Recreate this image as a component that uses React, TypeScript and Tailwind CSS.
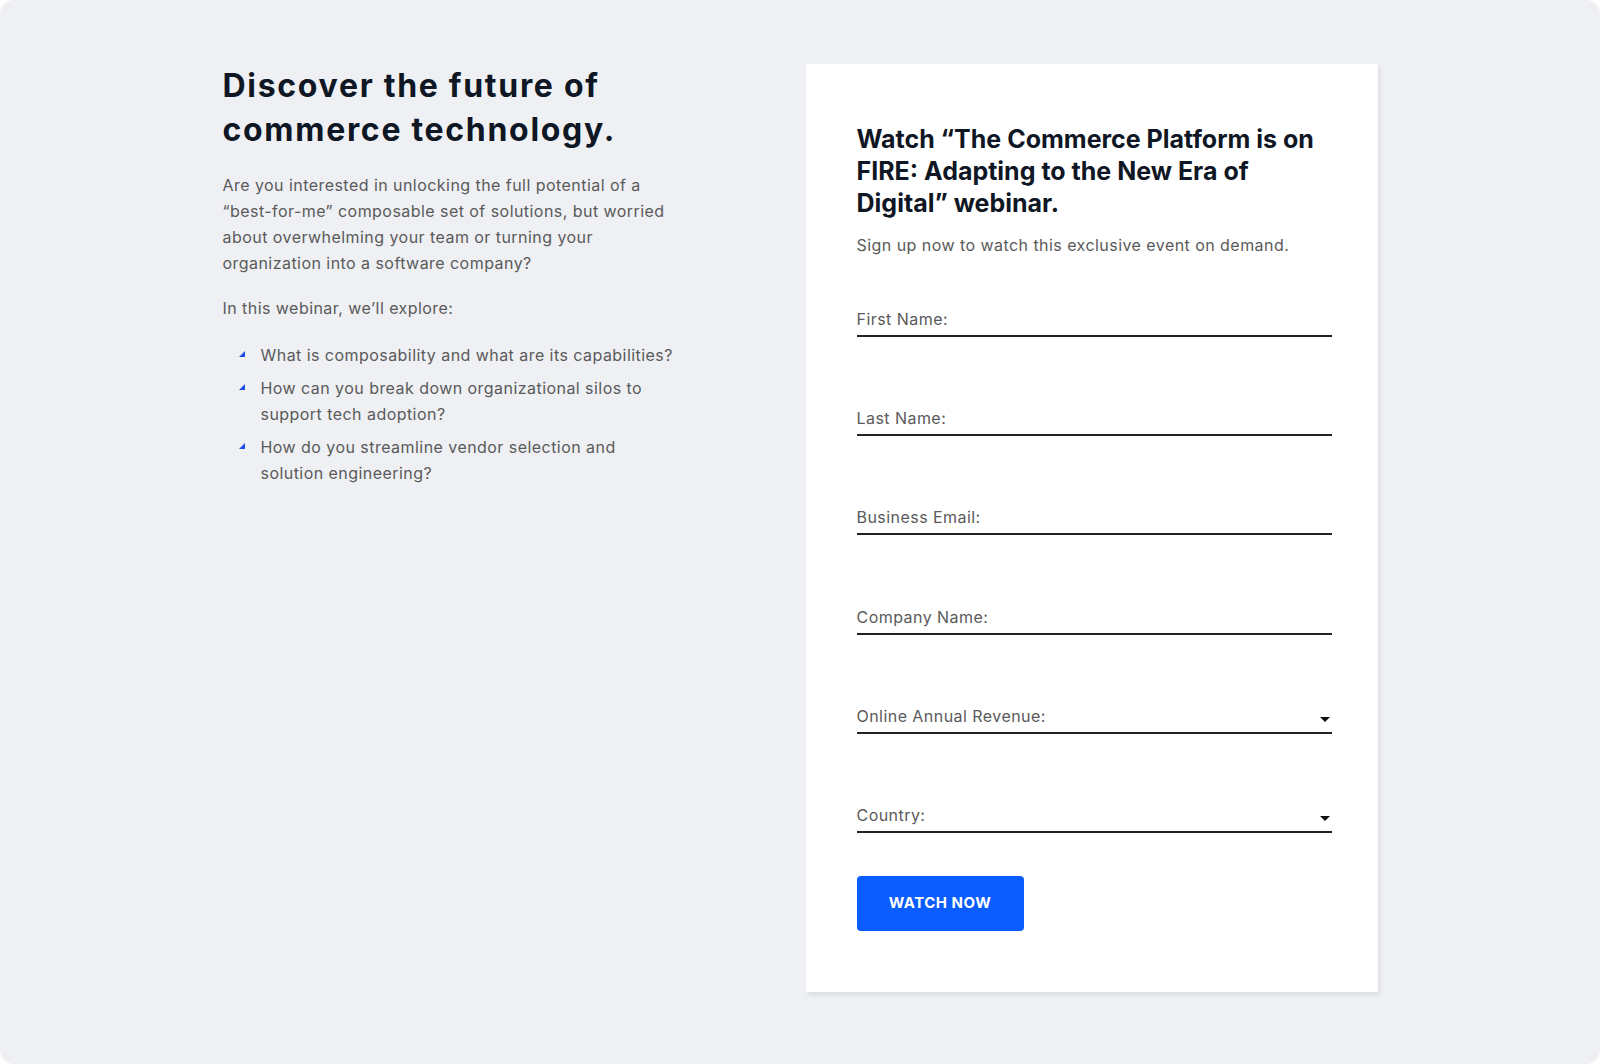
import React from "react";

const fields = [
  { label: "First Name:", select: false },
  { label: "Last Name:", select: false },
  { label: "Business Email:", select: false },
  { label: "Company Name:", select: false },
  { label: "Online Annual Revenue:", select: true },
  { label: "Country:", select: true },
];

const bullets = [
  ["What is composability and what are its capabilities?"],
  ["How can you break down organizational silos to", "support tech adoption?"],
  ["How do you streamline vendor selection and", "solution engineering?"],
];

function Bullet() {
  return (
    <svg width="6" height="6" viewBox="0 0 6 6" className="absolute left-[16px] top-[9px]">
      <polygon points="6,0 6,6 0,6" fill="#1d4fe6" />
    </svg>
  );
}

function Caret() {
  return (
    <svg width="10" height="5" viewBox="0 0 10 5" className="mr-[2px] mb-[10px]">
      <polygon points="0,0 10,0 5,5" fill="#111111" />
    </svg>
  );
}

export default function App() {
  return (
    <div className="w-full h-[1064px] bg-white" style={{ fontFamily: "Inter, 'Liberation Sans', sans-serif" }}>
      <div className="h-full rounded-[14px] bg-[#eef0f4] flex justify-center pt-[64px]">
        <div className="flex gap-[113px]">
          {/* left column */}
          <div className="w-[470px] text-[16px] leading-[26px] text-[#5a5a5a] tracking-[0.45px]">
            <h1 className="text-[32px] leading-[44px] font-bold text-[#0f1624] tracking-[1.7px]">
              Discover the future of
              <br />
              commerce technology.
            </h1>
            <p className="mt-[20px]">
              Are you interested in unlocking the full potential of a
              <br />
              “best-for-me” composable set of solutions, but worried
              <br />
              about overwhelming your team or turning your
              <br />
              organization into a software company?
            </p>
            <p className="mt-[19px]">In this webinar, we’ll explore:</p>
            <ul className="mt-[21px]">
              {bullets.map((b) => (
                <li key={b[0]} className="relative pl-[38px] mb-[7px]">
                  <Bullet />
                  {b.map((line, i) => (
                    <React.Fragment key={line}>
                      {i > 0 && <br />}
                      {line}
                    </React.Fragment>
                  ))}
                </li>
              ))}
            </ul>
          </div>

          {/* form card */}
          <div className="w-[572px] h-[928px] bg-white shadow-[2px_3px_4px_rgba(0,0,0,0.08)] pl-[51px] pr-[46px] pt-[59px]">
            <h2 className="text-[25px] leading-[32px] font-bold text-[#0f1624]">
              Watch “The Commerce Platform is on FIRE: Adapting to the New Era of Digital” webinar.
            </h2>
            <p className="mt-[14px] text-[16px] leading-[24px] text-[#5a5a5a] tracking-[0.45px]">
              Sign up now to watch this exclusive event on demand.
            </p>
            <div className="mt-[50px] flex flex-col gap-[69.2px]">
              {fields.map((f) => (
                <div
                  key={f.label}
                  className="h-[30px] flex items-end justify-between border-b-2 border-[#222222]"
                >
                  <span className="text-[16px] leading-[24px] pb-[4px] text-[#5a5a5a] tracking-[0.45px]">
                    {f.label}
                  </span>
                  {f.select && <Caret />}
                </div>
              ))}
            </div>
            <button className="mt-[43px] w-[167px] h-[55px] rounded-[4px] bg-[#0a5cff] text-white text-[15px] font-bold tracking-[0.5px]">
              WATCH NOW
            </button>
          </div>
        </div>
      </div>
    </div>
  );
}
